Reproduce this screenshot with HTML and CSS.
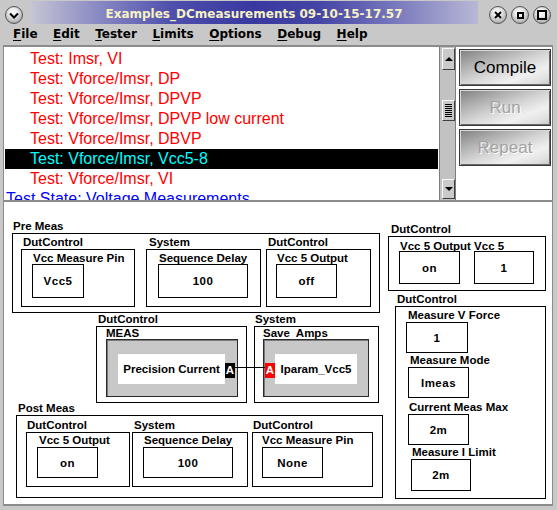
FILE: index.html
```html
<!DOCTYPE html>
<html>
<head>
<meta charset="utf-8">
<title>Examples_DCmeasurements</title>
<link rel="stylesheet" href="styles.css">
</head>
<body>
<div class="win">
  <div class="titlebar">
    <div class="wc wc-menu"><svg width="10" height="7" viewBox="0 0 10 7"><polyline points="1,1.5 5,5.5 9,1.5" fill="none" stroke="#000" stroke-width="2"/></svg></div>
    <div class="band"><span class="title">Examples_DCmeasurements 09-10-15-17.57</span></div>
    <div class="wbtns">
      <div class="wc"><svg width="8" height="8" viewBox="0 0 8 8"><path d="M1 1L7 7M7 1L1 7" stroke="#000" stroke-width="2"/></svg></div>
      <div class="wc"><span class="sq-s"></span></div>
      <div class="wc"><span class="sq-l"></span></div>
    </div>
  </div>

  <div class="menubar">
    <span><u>F</u>ile</span>
    <span><u>E</u>dit</span>
    <span><u>T</u>ester</span>
    <span><u>L</u>imits</span>
    <span><u>O</u>ptions</span>
    <span><u>D</u>ebug</span>
    <span><u>H</u>elp</span>
  </div>

  <div class="top">
    <div class="list">
      <div class="row">Test: Imsr, VI</div>
      <div class="row">Test: Vforce/Imsr, DP</div>
      <div class="row">Test: Vforce/Imsr, DPVP</div>
      <div class="row">Test: Vforce/Imsr, DPVP low current</div>
      <div class="row">Test: Vforce/Imsr, DBVP</div>
      <div class="row sel">Test: Vforce/Imsr, Vcc5-8</div>
      <div class="row">Test: Vforce/Imsr, VI</div>
      <div class="row state">Test State: Voltage Measurements</div>
    </div>
    <div class="scrollbar">
      <div class="sb-btn"><span class="arr-up"></span></div>
      <div class="thumb"><span class="grip"></span></div>
      <div class="sb-btn sb-down"><span class="arr-down"></span></div>
    </div>
    <div class="actions">
      <div class="btn">Compile</div>
      <div class="btn dis">Run</div>
      <div class="btn dis">Repeat</div>
    </div>
  </div>

  <div class="canvas">
    <div class="node pre">
      <div class="lbl">Pre Meas</div>
      <div class="box">
        <div class="grp g1">
          <div class="lbl">DutControl</div>
          <div class="field"><div class="ttl">Vcc Measure Pin</div><div class="val">Vcc5</div></div>
        </div>
        <div class="grp g2">
          <div class="lbl">System</div>
          <div class="field"><div class="ttl">Sequence Delay</div><div class="val">100</div></div>
        </div>
        <div class="grp g3">
          <div class="lbl">DutControl</div>
          <div class="field"><div class="ttl">Vcc 5 Output</div><div class="val">off</div></div>
        </div>
      </div>
    </div>

    <div class="node vcc">
      <div class="lbl">DutControl</div>
      <div class="box">
        <div class="ttl">Vcc 5 Output Vcc 5</div>
        <div class="vals">
          <div class="val v1">on</div>
          <div class="val v2">1</div>
        </div>
      </div>
    </div>

    <div class="node meas-set">
      <div class="lbl">DutControl</div>
      <div class="box">
        <div class="it it1"><div class="ttl">Measure V Force</div><div class="val">1</div></div>
        <div class="it it2"><div class="ttl">Measure Mode</div><div class="val">Imeas</div></div>
        <div class="it it3"><div class="ttl">Current Meas Max</div><div class="val">2m</div></div>
        <div class="it it4"><div class="ttl">Measure I Limit</div><div class="val">2m</div></div>
      </div>
    </div>

    <div class="node meas">
      <div class="lbl">DutControl</div>
      <div class="box">
        <div class="ttl">MEAS</div>
        <div class="chip">
          <div class="wbox">Precision Current</div>
          <div class="badge blk">A</div>
        </div>
      </div>
    </div>

    <div class="node save">
      <div class="lbl">System</div>
      <div class="box">
        <div class="ttl">Save  Amps</div>
        <div class="chip">
          <div class="badge red">A</div>
          <div class="wbox">Iparam_Vcc5</div>
        </div>
      </div>
    </div>

    <div class="wire"></div>

    <div class="node post">
      <div class="lbl">Post Meas</div>
      <div class="box">
        <div class="grp g1">
          <div class="lbl">DutControl</div>
          <div class="field"><div class="ttl">Vcc 5 Output</div><div class="val">on</div></div>
        </div>
        <div class="grp g2">
          <div class="lbl">System</div>
          <div class="field"><div class="ttl">Sequence Delay</div><div class="val">100</div></div>
        </div>
        <div class="grp g3">
          <div class="lbl">DutControl</div>
          <div class="field"><div class="ttl">Vcc Measure Pin</div><div class="val">None</div></div>
        </div>
      </div>
    </div>
  </div>
</div>
</body>
</html>
```

FILE: styles.css
```css
* { box-sizing: border-box; margin: 0; padding: 0; }
html, body { width: 557px; height: 510px; overflow: hidden; }
body {
  background: #c8c8c8;
  font-family: "Liberation Sans", Arial, sans-serif;
  color: #000;
}

/* ---------- title bar ---------- */
.titlebar {
  height: 24px;
  display: flex;
  align-items: flex-start;
}
.wc {
  flex: none;
  width: 18px;
  height: 18px;
  margin-top: 6px;
  border-radius: 50%;
  border: 1px solid #555;
  background: radial-gradient(circle at 45% 35%, #ffffff 0%, #ececec 30%, #b4b4b4 70%, #7c7c7c 100%);
  display: flex;
  align-items: center;
  justify-content: center;
}
.wc-menu { margin-left: 5px; }
.band {
  flex: none;
  width: 448px;
  height: 23px;
  margin-left: 7px;
  margin-top: 1px;
  background: linear-gradient(to right, #c6c6d4 0%, #8a8ac4 15%, #4e4eac 32%, #3838a0 50%, #4646a6 65%, #7a7abe 82%, #b8b8d6 100%);
  display: flex;
  justify-content: center;
  align-items: center;
}
.title {
  font-family: "DejaVu Sans", sans-serif;
  font-weight: bold;
  font-size: 12px;
  color: #f6f2c4;
  white-space: nowrap;
  padding-top: 2px;
}
.wbtns {
  display: flex;
  gap: 4px;
  margin-left: 11px;
}
.sq-s { width: 7px; height: 7px; border: 2px solid #000; }
.sq-l { width: 10px; height: 10px; border: 2px solid #000; }

/* ---------- menu bar ---------- */
.menubar {
  height: 21px;
  display: flex;
  gap: 15.5px;
  padding-left: 13px;
  font-family: "DejaVu Sans", sans-serif;
  font-weight: bold;
  font-size: 12px;
  line-height: 21px;
}
.menubar u { text-underline-offset: 2px; }

/* ---------- top section ---------- */
.top {
  margin-left: 3px;
  width: 550px;
  height: 155px;
  border-top: 2px solid #8c8c8c;
  display: flex;
}
.list {
  width: 436px;
  background: #fff;
  border-left: 1px solid #8c8c8c;
  padding-top: 2px;
  overflow: hidden;
}
.row {
  height: 20px;
  line-height: 20px;
  margin: 0 1px;
  padding-left: 25px;
  font-size: 16px;
  color: #f00;
  white-space: nowrap;
}
.row.sel { background: #000; color: #0ff; }
.row.state { padding-left: 1px; color: #00f; }

.scrollbar {
  width: 17px;
  background: #c2c2c2;
  border-left: 1px solid #7c7c7c;
  border-right: 1px solid #7c7c7c;
  padding: 1px 1px 1px 2px;
  display: flex;
  flex-direction: column;
}
.sb-btn {
  width: 13px;
  height: 22px;
  background: #cacaca;
  border: 1px solid;
  border-color: #fafafa #404040 #404040 #fafafa;
  display: flex;
  align-items: center;
  justify-content: center;
}
.sb-down { margin-top: auto; height: 20px; }
.arr-up { width: 0; height: 0; border-left: 4px solid transparent; border-right: 4px solid transparent; border-bottom: 4px solid #000; }
.arr-down { width: 0; height: 0; border-left: 4px solid transparent; border-right: 4px solid transparent; border-top: 4px solid #000; }
.thumb {
  width: 13px;
  height: 21px;
  margin-top: 30px;
  background: #cacaca;
  border: 1px solid;
  border-color: #fafafa #404040 #404040 #fafafa;
  display: flex;
  align-items: center;
  justify-content: center;
}
.grip {
  width: 7px;
  height: 13px;
  background: repeating-linear-gradient(to bottom, #000 0, #000 1px, transparent 1px, transparent 2px);
}

.actions {
  width: 97px;
  background: #fff;
  border-right: 1px solid #808080;
  padding: 2px 0 0 3px;
}
.btn {
  width: 92px;
  height: 37px;
  margin-bottom: 3px;
  border: 1px solid #3a3a3a;
  box-shadow: inset 1px 1px 0 #d8d8d8, inset -1px -1px 0 #6a6a6a;
  background: linear-gradient(160deg, #7e7e7e 0%, #a6a6a6 22%, #d4d4d4 50%, #f0f0f0 72%, #e0e0e0 88%, #c4c4c4 100%);
  font-size: 17px;
  line-height: 35px;
  text-align: center;
}
.btn.dis { color: #a2a2a2; text-shadow: 1px 1px 0 #fff; }

/* ---------- canvas ---------- */
.canvas {
  position: relative;
  margin-left: 3px;
  width: 550px;
  height: 306px;
  background: #fff;
  border-top: 2px solid #8c8c8c;
  border-left: 1px solid #8c8c8c;
  border-right: 1px solid #8c8c8c;
  border-bottom: 2px solid #8c8c8c;
  font-size: 11.5px;
  font-weight: bold;
}
.node { position: absolute; }
.lbl, .ttl { white-space: pre; height: 13px; line-height: 13px; }
.box { border: 1px solid #000; }
.val {
  border: 1px solid #000;
  display: flex;
  align-items: center;
  justify-content: center;
  letter-spacing: 0.5px;
}

/* Pre Meas */
.pre { left: 8px; top: 18px; width: 368px; }
.pre > .lbl { padding-left: 1px; }
.pre > .box { height: 80px; display: flex; padding: 2px 0 0 8px; }
.grp { flex: none; }
.field { border: 1px solid #000; }
.pre .g1 { width: 114px; }
.pre .g2 { width: 115px; margin-left: 11px; }
.pre .g3 { width: 105px; margin-left: 5px; }
.pre .g1 > .lbl, .pre .g3 > .lbl { padding-left: 2px; }
.pre .g2 > .lbl { padding-left: 3px; }
.pre .field { height: 58px; padding-top: 2px; }
.pre .field .ttl { height: 12px; line-height: 12px; padding-left: 1px; }
.pre .val { height: 34px; }
.pre .g1 .field { padding-left: 10px; }
.pre .g2 .field { padding-left: 11px; }
.pre .g3 .field { padding-left: 9px; }
.pre .g1 .val { width: 52px; }
.pre .g2 .val { width: 90px; }
.pre .g3 .val { width: 61px; }

/* Vcc 5 top right */
.vcc { left: 384px; top: 21px; width: 158px; }
.vcc > .lbl { padding-left: 3px; }
.vcc > .box { height: 55px; padding: 4px 0 0 10px; }
.vcc .ttl { height: 10px; line-height: 10px; padding-left: 1px; }
.vcc .vals { display: flex; gap: 14px; }
.vcc .val { height: 33px; }
.vcc .v1 { width: 61px; }
.vcc .v2 { width: 60px; }

/* Measure settings lower right */
.meas-set { left: 391px; top: 91px; width: 151px; }
.meas-set > .lbl { padding-left: 2px; }
.meas-set > .box { height: 193px; padding-top: 1px; }
.it .val { height: 31px; }
.it1 { margin: 1px 0 0 10px; }
.it2 { margin: 1px 0 0 12px; }
.it3 { margin: 3px 0 0 12px; }
.it4 { margin: 1px 0 0 15px; }
.it1 .ttl, .it2 .ttl { padding-left: 2px; }
.it3 .ttl, .it4 .ttl { padding-left: 1px; }
.it1 .val { width: 62px; }
.it2 .val, .it3 .val { width: 61px; }
.it4 .val { width: 60px; height: 32px; }

/* MEAS / Save Amps */
.meas { left: 92px; top: 111px; width: 151px; }
.meas > .lbl { padding-left: 2px; }
.meas > .box { height: 77px; padding: 1px 0 0 9px; }
.save { left: 250px; top: 111px; width: 125px; }
.save > .lbl { padding-left: 1px; }
.save > .box { height: 77px; padding: 1px 0 0 8px; }
.meas .ttl, .save .ttl { height: 11px; line-height: 11px; }
.chip {
  height: 58px;
  background: #c8c8c8;
  border: 1px solid #2a2a2a;
  box-shadow: inset 1px 1px 0 #7a7a7a;
  display: flex;
  align-items: flex-start;
  padding-top: 14px;
}
.meas .chip { width: 132px; padding-left: 11px; }
.save .chip { width: 106px; padding-left: 1px; }
.wbox {
  height: 30px;
  line-height: 30px;
  background: #fff;
  text-align: center;
  white-space: nowrap;
}
.meas .wbox { width: 107px; }
.save .wbox { width: 82px; }
.badge {
  width: 10px;
  height: 15px;
  margin-top: 9px;
  line-height: 15px;
  text-align: center;
  color: #fff;
  font-size: 11.5px;
}
.badge.blk { background: #000; }
.badge.red { background: #f00; }
.wire {
  position: absolute;
  left: 230px;
  top: 165px;
  width: 31px;
  height: 1px;
  background: #000;
}

/* Post Meas */
.post { left: 12px; top: 200px; width: 367px; }
.post > .lbl { padding-left: 2px; }
.post > .box { height: 83px; display: flex; padding: 3px 0 0 9px; }
.post .g1 { width: 104px; }
.post .g2 { width: 116px; margin-left: 2px; }
.post .g3 { width: 121px; margin-left: 4px; }
.post .g1 > .lbl, .post .g3 > .lbl { padding-left: 1px; }
.post .g2 > .lbl { padding-left: 2px; }
.post .field { height: 55px; padding-top: 1px; }
.post .g1 .field { padding-left: 10px; }
.post .g2 .field { padding-left: 10px; }
.post .g3 .field { padding-left: 9px; }
.post .g1 .ttl { padding-left: 2px; }
.post .g2 .ttl { padding-left: 1px; }
.post .val { height: 31px; }
.post .g1 .val { width: 61px; }
.post .g2 .val { width: 90px; }
.post .g3 .val { width: 61px; }
```
